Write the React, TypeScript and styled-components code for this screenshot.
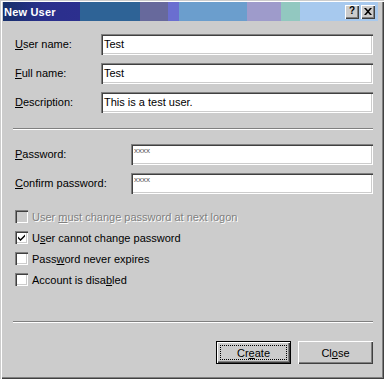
import React from 'react'
import styled, { createGlobalStyle } from 'styled-components'

const GlobalStyle = createGlobalStyle`
  html, body {
    margin: 0;
    padding: 0;
    background: #cccccc;
  }

  body {
    font-family: 'Liberation Sans', Arial, sans-serif;
    font-size: 11px;
    color: #000;
  }
`

const App = () => {
  return (
    <>
      <GlobalStyle />
      <Window>
        <TitleBar>
          <Title>New User</Title>
          <CaptionButtons>
            <CaptionButton>
              <HelpGlyph>?</HelpGlyph>
            </CaptionButton>
            <CaptionButton>
              <svg width="8" height="7" viewBox="0 0 8 7">
                <path d="M0 0h2l2 2.2L6 0h2L5 3.5 8 7H6L4 4.8 2 7H0l3-3.5z" fill="#000" />
              </svg>
            </CaptionButton>
          </CaptionButtons>
        </TitleBar>

        <Body>
          <FieldGrid $labelWidth={86}>
            <Label>
              <u>U</u>ser name:
            </Label>
            <TextBox>Test</TextBox>
            <Label>
              <u>F</u>ull name:
            </Label>
            <TextBox>Test</TextBox>
            <Label>
              <u>D</u>escription:
            </Label>
            <TextBox>This is a test user.</TextBox>
          </FieldGrid>

          <Separator $top={15} />

          <FieldGrid $labelWidth={116} $top={14}>
            <Label>
              <u>P</u>assword:
            </Label>
            <TextBox $password>xxxx</TextBox>
            <Label>
              <u>C</u>onfirm password:
            </Label>
            <TextBox $password>xxxx</TextBox>
          </FieldGrid>

          <CheckList>
            <CheckRow $disabled>
              <CheckBox $disabled />
              <span>
                User <u>m</u>ust change password at next logon
              </span>
            </CheckRow>
            <CheckRow>
              <CheckBox>
                <svg width="7" height="7" viewBox="0 0 7 7">
                  <path d="M0 2.5l2.5 2.5L7 0.5v2L2.5 7 0 4.5z" fill="#000" />
                </svg>
              </CheckBox>
              <span>
                U<u>s</u>er cannot change password
              </span>
            </CheckRow>
            <CheckRow>
              <CheckBox />
              <span>
                Pass<u>w</u>ord never expires
              </span>
            </CheckRow>
            <CheckRow>
              <CheckBox />
              <span>
                Account is disa<u>b</u>led
              </span>
            </CheckRow>
          </CheckList>

          <Separator $top={31} />

          <ButtonBar>
            <PushButton $default>
              <FocusRing>
                Cr<u>e</u>ate
              </FocusRing>
            </PushButton>
            <PushButton>
              Cl<u>o</u>se
            </PushButton>
          </ButtonBar>
        </Body>
      </Window>
    </>
  )
}

const Window = styled.div`
  width: 384px;
  height: 379px;
  box-sizing: border-box;
  padding-top: 2px;
  background: #cccccc;
  box-shadow: inset 1px 1px #cccccc, inset 2px 2px #ffffff,
    inset -1px -1px #404040, inset -2px -2px #808080;
  overflow: hidden;
`

const TitleBar = styled.div`
  height: 19px;
  margin: 0 6px 0 3px;
  padding-left: 1px;
  display: flex;
  align-items: center;
  background: linear-gradient(
    90deg,
    #16306a 0px,
    #2a2f8c 40px,
    #2c2f8e 77px,
    #2e6396 77px,
    #2e6396 137px,
    #67699c 137px,
    #67699c 165px,
    #6a6ed0 165px,
    #6a6ed0 176px,
    #6b9ecd 176px,
    #6b9ecd 244px,
    #9e9bcb 244px,
    #9e9bcb 278px,
    #92c8c0 278px,
    #92c8c0 297px,
    #a7c9ee 297px
  );
`

const Title = styled.span`
  color: #fff;
  font-weight: bold;
  font-size: 11px;
  letter-spacing: 0.2px;
`

const CaptionButtons = styled.div`
  margin-left: auto;
  margin-right: 3px;
  display: flex;
  gap: 2px;
`

const CaptionButton = styled.div`
  width: 14px;
  height: 14px;
  box-sizing: border-box;
  display: flex;
  align-items: center;
  justify-content: center;
  background: #cccccc;
  box-shadow: inset 1px 1px #ffffff, inset -1px -1px #404040,
    inset -2px -2px #808080;
`

const HelpGlyph = styled.span`
  font-weight: bold;
  font-size: 10px;
  line-height: 10px;
  margin-top: -1px;
`

const Body = styled.div`
  padding: 13px 11px 0 15px;
`

const FieldGrid = styled.div<{ $labelWidth: number; $top?: number }>`
  display: grid;
  grid-template-columns: ${(p) => p.$labelWidth}px 1fr;
  row-gap: 8px;
  align-items: center;
  margin-top: ${(p) => p.$top || 0}px;
`

const Label = styled.div`
  font-size: 11px;
  line-height: 13px;
`

const TextBox = styled.div<{ $password?: boolean }>`
  height: 21px;
  box-sizing: border-box;
  padding: 0 4px 0 3px;
  display: flex;
  align-items: ${(p) => (p.$password ? 'flex-start' : 'center')};
  padding-top: ${(p) => (p.$password ? '3px' : '0')};
  background: #fff;
  font-size: ${(p) => (p.$password ? '8px' : '11px')};
  line-height: ${(p) => (p.$password ? '8px' : '13px')};
  color: ${(p) => (p.$password ? '#555' : '#000')};
  box-shadow: inset 1px 1px #808080, inset 2px 2px #404040,
    inset -1px -1px #ffffff, inset -2px -2px #cccccc;
`

const Separator = styled.div<{ $top: number }>`
  height: 0;
  margin: ${(p) => p.$top}px 0 0 -2px;
  border-top: 1px solid #808080;
  border-bottom: 1px solid #ffffff;
`

const CheckList = styled.div`
  margin-top: 12px;
  display: flex;
  flex-direction: column;
`

const CheckRow = styled.div<{ $disabled?: boolean }>`
  height: 21px;
  display: flex;
  align-items: center;
  gap: 4px;
  color: ${(p) => (p.$disabled ? '#808080' : '#000')};
  text-shadow: ${(p) => (p.$disabled ? '1px 1px #ffffff' : 'none')};
`

const CheckBox = styled.div<{ $disabled?: boolean }>`
  width: 13px;
  height: 13px;
  flex: none;
  box-sizing: border-box;
  display: flex;
  align-items: center;
  justify-content: center;
  background: ${(p) => (p.$disabled ? '#cccccc' : '#ffffff')};
  box-shadow: inset 1px 1px #808080, inset 2px 2px #404040,
    inset -1px -1px #ffffff, inset -2px -2px #cccccc;
`

const ButtonBar = styled.div`
  margin-top: 18px;
  display: flex;
  justify-content: flex-end;
  gap: 7px;
`

const PushButton = styled.div<{ $default?: boolean }>`
  width: 75px;
  height: 23px;
  box-sizing: border-box;
  display: flex;
  align-items: center;
  justify-content: center;
  padding: 3px;
  background: #cccccc;
  font-size: 11px;
  border: ${(p) => (p.$default ? '1px solid #000' : 'none')};
  box-shadow: inset 1px 1px #ffffff, inset -1px -1px #404040,
    inset -2px -2px #808080;
`

const FocusRing = styled.span`
  flex: 1;
  align-self: stretch;
  display: flex;
  align-items: center;
  justify-content: center;
  border: 1px dotted #000;
`

export default App
